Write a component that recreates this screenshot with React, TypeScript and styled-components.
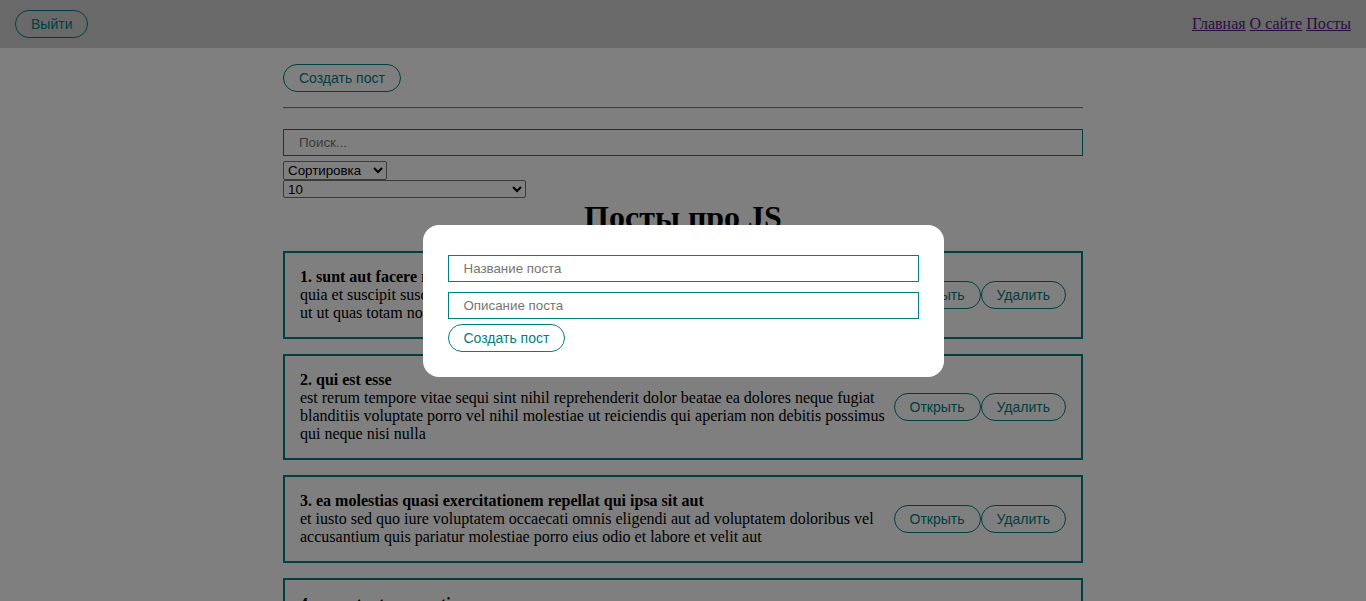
import React from "react";
import styled, { createGlobalStyle } from "styled-components";

const GlobalStyle = createGlobalStyle`
  * {
    margin: 0;
    padding: 0;
    box-sizing: border-box;
  }
  body {
    font-family: "Liberation Serif", "Times New Roman", serif;
    font-size: 16px;
    background: #fff;
    color: #000;
  }
`;

const Navbar = styled.div`
  height: 48px;
  display: flex;
  align-items: center;
  padding: 0 15px;
  background: lightgray;
`;

const NavLinks = styled.div`
  margin-left: auto;
  font-family: "Liberation Serif", "Times New Roman", serif;
  font-size: 16px;
`;

const NavLink = styled.a`
  color: #551a8b;
  text-decoration: underline;
  cursor: pointer;
`;

const Page = styled.div`
  width: 800px;
  margin: 0 auto;
  display: flex;
  flex-direction: column;
`;

const Button = styled.button<{ $mt?: number }>`
  align-self: flex-start;
  padding: 5px 15px;
  color: teal;
  font-family: "Liberation Sans", Arial, sans-serif;
  font-size: 14px;
  line-height: 16px;
  background: transparent;
  border: 1px solid teal;
  border-radius: 20px;
  cursor: pointer;
  margin-top: ${(p) => p.$mt ?? 0}px;
`;

const NavButton = styled(Button)`
  align-self: center;
`;

const Divider = styled.hr`
  margin: 15px 0;
  border: none;
  border-top: 1px solid #808080;
  border-bottom: 1px solid #eee;
`;

const Input = styled.input`
  display: block;
  width: 100%;
  padding: 5px 15px;
  margin: 5px 0;
  border: 1px solid teal;
  font-family: "Liberation Sans", Arial, sans-serif;
  font-size: 13.33px;
  line-height: 15px;
  outline: none;
  &::placeholder {
    color: #757575;
  }
`;

const Select = styled.select<{ $w: number }>`
  display: block;
  width: ${(p) => p.$w}px;
  height: 18.5px;
  font-family: "Liberation Sans", Arial, sans-serif;
  font-size: 13.33px;
  color: #000;
  background: #fff;
  border: 1px solid #767676;
  border-radius: 2px;
`;

const Title = styled.h1`
  text-align: center;
  font-family: "Liberation Serif", "Times New Roman", serif;
  font-size: 32px;
  font-weight: bold;
  line-height: 38px;
`;

const PostCard = styled.div`
  display: flex;
  justify-content: space-between;
  align-items: center;
  padding: 15px;
  border: 2px solid teal;
  margin-top: 15px;
`;

const PostContent = styled.div`
  font-family: "Liberation Serif", "Times New Roman", serif;
  font-size: 16px;
  line-height: normal;
`;

const PostButtons = styled.div`
  display: flex;
  flex-shrink: 0;
  margin-left: 8px;
`;

const Overlay = styled.div`
  position: fixed;
  inset: 0;
  display: flex;
  justify-content: center;
  align-items: center;
  background: rgba(0, 0, 0, 0.5);
`;

const ModalContent = styled.div`
  padding: 25px;
  background: #fff;
  border-radius: 16px;
  min-width: 250px;
`;

const ModalForm = styled.form`
  width: 471px;
  display: flex;
  flex-direction: column;
`;

const posts = [
  {
    id: 1,
    title: "sunt aut facere repellat provident occaecati excepturi optio reprehenderit",
    body: "quia et suscipit suscipit recusandae consequuntur expedita et cum reprehenderit molestiae ut ut quas totam nostrum rerum est autem sunt rem eveniet architecto",
  },
  {
    id: 2,
    title: "qui est esse",
    body: "est rerum tempore vitae sequi sint nihil reprehenderit dolor beatae ea dolores neque fugiat blanditiis voluptate porro vel nihil molestiae ut reiciendis qui aperiam non debitis possimus qui neque nisi nulla",
  },
  {
    id: 3,
    title: "ea molestias quasi exercitationem repellat qui ipsa sit aut",
    body: "et iusto sed quo iure voluptatem occaecati omnis eligendi aut ad voluptatem doloribus vel accusantium quis pariatur molestiae porro eius odio et labore et velit aut",
  },
  {
    id: 4,
    title: "eum et est occaecati",
    body: "ullam et saepe reiciendis voluptatem adipisci sit amet autem assumenda provident rerum culpa quis hic commodi nesciunt rem tenetur doloremque ipsam iure quis sunt voluptatem rerum illo velit",
  },
];

export default function App() {
  return (
    <>
      <GlobalStyle />
      <Navbar>
        <NavButton>Выйти</NavButton>
        <NavLinks>
          <NavLink>Главная</NavLink> <NavLink>О сайте</NavLink> <NavLink>Посты</NavLink>
        </NavLinks>
      </Navbar>
      <Page>
        <Button $mt={16}>Создать пост</Button>
        <Divider />
        <Input placeholder="Поиск..." readOnly />
        <Select $w={104} defaultValue="">
          <option value="" disabled>
            Сортировка
          </option>
          <option value="title">По названию</option>
          <option value="body">По описанию</option>
        </Select>
        <Select $w={243} defaultValue="10">
          <option value="5">5</option>
          <option value="10">10</option>
          <option value="25">25</option>
          <option value="-1">Показать все</option>
        </Select>
        <Title>Посты про JS</Title>
        {posts.map((p) => (
          <PostCard key={p.id}>
            <PostContent>
              <strong>
                {p.id}. {p.title}
              </strong>
              <div>{p.body}</div>
            </PostContent>
            <PostButtons>
              <Button>Открыть</Button>
              <Button>Удалить</Button>
            </PostButtons>
          </PostCard>
        ))}
      </Page>
      <Overlay>
        <ModalContent>
          <ModalForm onSubmit={(e) => e.preventDefault()}>
            <Input placeholder="Название поста" readOnly />
            <Input placeholder="Описание поста" readOnly />
            <Button type="button">Создать пост</Button>
          </ModalForm>
        </ModalContent>
      </Overlay>
    </>
  );
}
